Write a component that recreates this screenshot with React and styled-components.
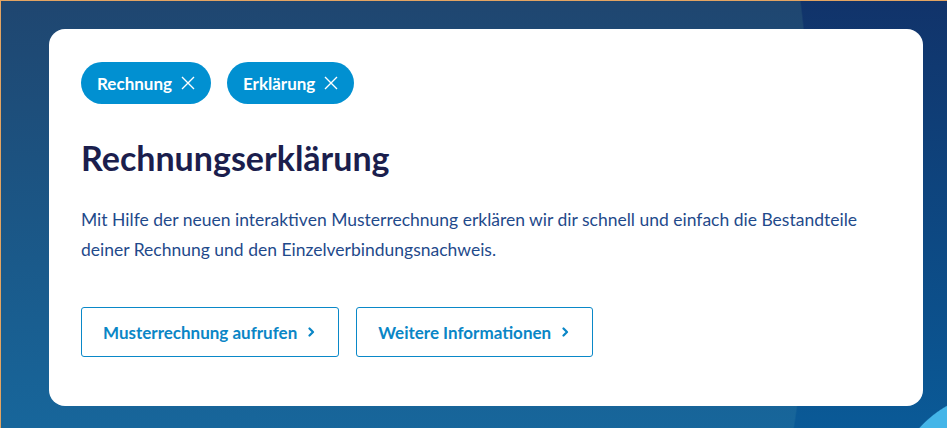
import React from "react";
import styled, { createGlobalStyle } from "styled-components";

const Global = createGlobalStyle`
  html, body { margin: 0; padding: 0; }
  body { font-family: Lato, "Open Sans", sans-serif; }
  * { box-sizing: border-box; }
`;

const Page = styled.div`
  position: relative;
  width: 947px;
  height: 428px;
  overflow: hidden;
  border-top: 1px solid #e3a462;
  border-left: 1px solid #e3a462;
  padding: 28px 0 0 48px;
  background:
    radial-gradient(circle 110px at 1000px 500px, #44b5e8 99%, transparent 100%),
    linear-gradient(180deg, #11336a 0%, #0a5a97 100%);
  isolation: isolate;

  &::before {
    content: "";
    position: absolute;
    inset: 0;
    z-index: -1;
    background: linear-gradient(180deg, #1f4670 0%, #17669b 100%);
    -webkit-mask-image: radial-gradient(ellipse 520px 900px at 292px 190px, #000 99.7%, transparent 100%);
    mask-image: radial-gradient(ellipse 520px 900px at 292px 190px, #000 99.7%, transparent 100%);
  }
`;

const Card = styled.section`
  width: 874px;
  height: 377px;
  background: #fff;
  border-radius: 16px;
  padding: 33px 32px 0 32px;
  display: flex;
  flex-direction: column;
`;

const TagRow = styled.div`
  display: flex;
  gap: 16px;
`;

const Tag = styled.button`
  display: inline-flex;
  align-items: center;
  gap: 9px;
  height: 42px;
  padding: 0 16px 0 16px;
  border: none;
  border-radius: 21px;
  background: #0190d1;
  color: #fff;
  font-family: Lato, sans-serif;
  font-weight: 700;
  font-size: 17px;
  cursor: pointer;
`;

const Heading = styled.h2`
  margin: 34px 0 0;
  font-family: Lato, sans-serif;
  font-weight: 700;
  font-size: 34px;
  line-height: 40px;
  color: #1b1e4d;
`;

const Text = styled.p`
  margin: 27px 0 0;
  font-family: Lato, sans-serif;
  font-size: 17.5px;
  line-height: 30px;
  color: #1f4a8b;
  max-width: 800px;
`;

const ButtonRow = styled.div`
  display: flex;
  gap: 17px;
  margin-top: 42px;
`;

const LinkButton = styled.a`
  display: inline-flex;
  align-items: center;
  gap: 11px;
  height: 50px;
  padding: 0 23px 0 21px;
  border: 1px solid #0a88c8;
  border-radius: 3px;
  color: #0a86c6;
  font-family: Lato, sans-serif;
  font-weight: 700;
  font-size: 17px;
  text-decoration: none;
`;

const Close = () => (
  <svg width="14" height="14" viewBox="0 0 14 14" fill="none" stroke="#fff" strokeWidth="1.4">
    <path d="M1 1 L13 13 M13 1 L1 13" />
  </svg>
);

const Chevron = () => (
  <svg width="7" height="10" viewBox="0 0 7 10" fill="none" stroke="currentColor" strokeWidth="2.2" strokeLinecap="round" strokeLinejoin="round">
    <path d="M1.5 1.5 L5 5 L1.5 8.5" />
  </svg>
);

export default function App() {
  return (
    <>
      <Global />
      <Page>
        <Card>
          <TagRow>
            <Tag>Rechnung <Close /></Tag>
            <Tag>Erklärung <Close /></Tag>
          </TagRow>
          <Heading>Rechnungserklärung</Heading>
          <Text>
            Mit Hilfe der neuen interaktiven Musterrechnung erklären wir dir schnell und einfach die Bestandteile deiner Rechnung und den Einzelverbindungsnachweis.
          </Text>
          <ButtonRow>
            <LinkButton href="#">Musterrechnung aufrufen <Chevron /></LinkButton>
            <LinkButton href="#">Weitere Informationen <Chevron /></LinkButton>
          </ButtonRow>
        </Card>
      </Page>
    </>
  );
}
